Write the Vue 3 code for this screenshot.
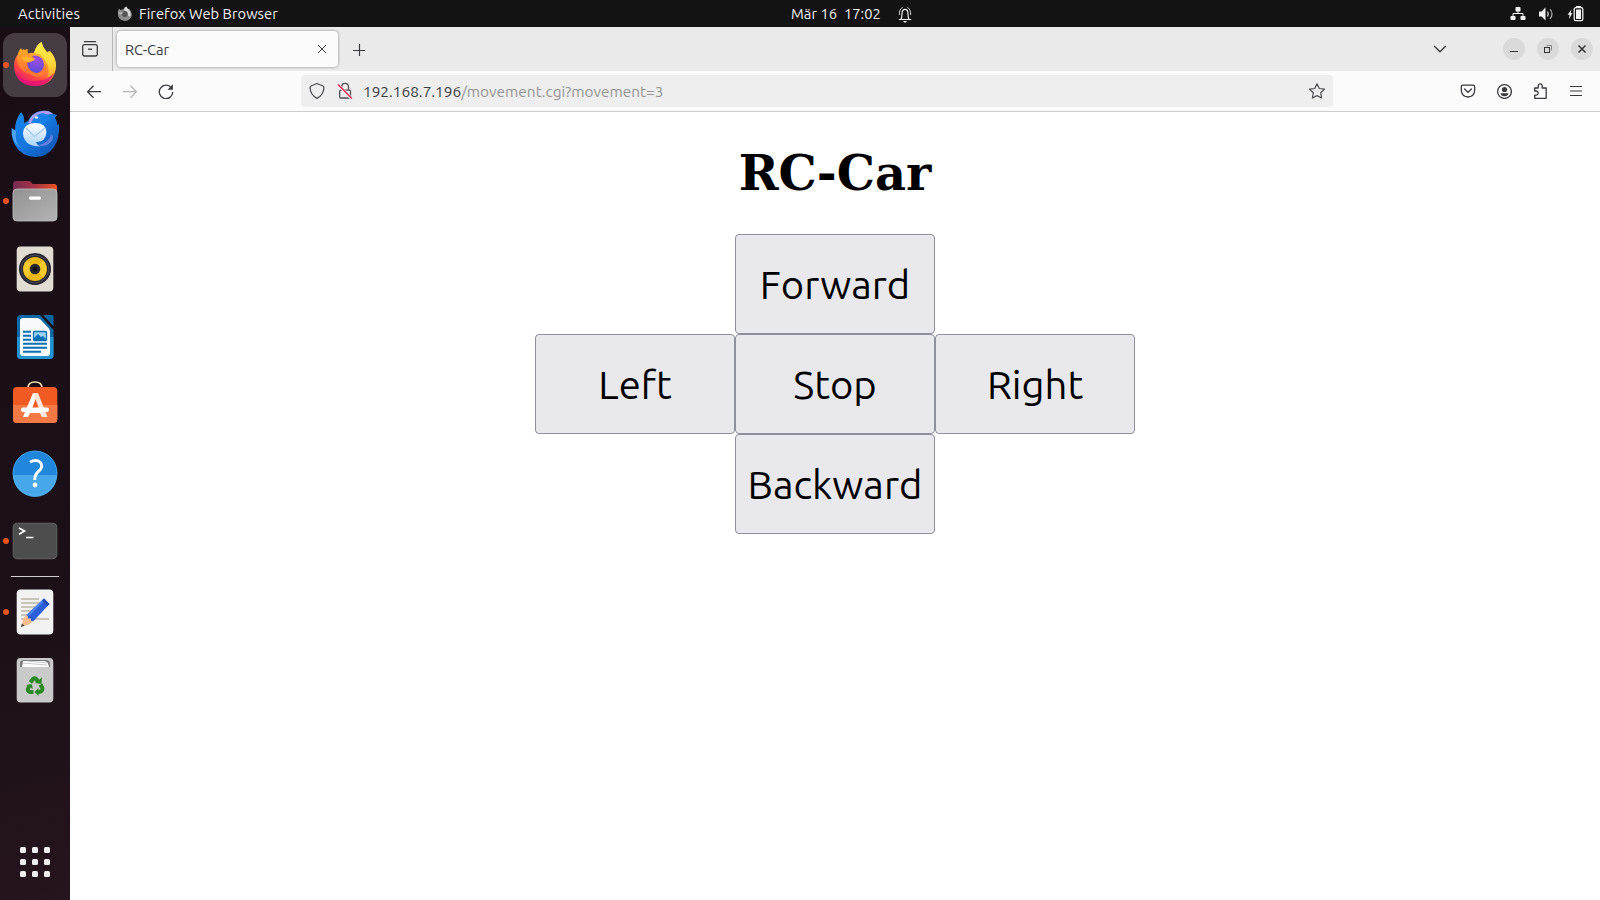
<script setup>
const pad = [
  { label: 'Forward', cls: 'forward' },
  { label: 'Left', cls: 'left' },
  { label: 'Stop', cls: 'stop' },
  { label: 'Right', cls: 'right' },
  { label: 'Backward', cls: 'backward' },
]
</script>

<template>
  <div class="desktop">
    <header class="topbar">
      <span class="activities">Activities</span>
      <span class="app-menu">
        <svg width="16" height="16" viewBox="0 0 16 16">
          <path d="M1 5 L2 2.6 L3.4 4 Q5 3.4 6 3.6 Q7.5 1 9.4 0.6 Q9.8 2 11 3 Q11.5 2.4 12.6 3.2 Q15 6 14.8 9 Q14 14.6 8 15 Q1.4 14.6 0.9 8.6 Z" fill="#8c8c8c" />
          <path d="M7 4 Q7.6 1.6 9.4 0.6 Q10 2.6 12.4 4.4 Q14.4 7 13 11 Q10 9 9.5 6 Z" fill="#d9d9d9" />
          <circle cx="7.8" cy="8" r="3" fill="#555" />
          <path d="M1.2 6.4 L6.6 6.6 Q5 8.8 2.4 8.2 Z" fill="#b9b9b9" />
        </svg>
        <span>Firefox Web Browser</span>
      </span>
      <span class="clock">Mär 16&nbsp; 17:02</span>
      <svg class="bell" width="14" height="18" viewBox="0 0 14 18" fill="none" stroke="#eee">
        <path d="M.8 14.500H13.200M3 14.500Q4 12 4 9Q4 4.400 7 4.400Q10 4.400 10 9Q10 12 11 14.500" stroke-width="1.200" />
        <path d="M1.300 10Q1.200 4 4.600 2.500M12.700 10Q12.800 4 9.400 2.500" stroke-width=".9" />
        <path d="M5 16H9L7.800 17.500H6.200Z" fill="#eee" stroke="none" />
      </svg>
      <div class="status">
        <svg width="16" height="16" viewBox="0 0 16 16" fill="#f2f2f2">
          <rect x="5.500" y="1" width="5" height="4.500" rx=".8" /><rect x=".5" y="10" width="5" height="4" rx=".8" /><rect x="10.500" y="10" width="5" height="4" rx=".8" />
          <path d="M8 5V8M3 10.500V7.500H13V10.500" fill="none" stroke="#f2f2f2" />
        </svg>
        <svg width="16" height="16" viewBox="0 0 16 16">
          <path d="M1 5.500H3.500L7.500 1.500V14.500L3.500 10.500H1Z" fill="#f2f2f2" />
          <path d="M9.500 5.500Q11 8 9.500 10.500" fill="none" stroke="#ddd" stroke-width="1.300" />
          <path d="M12 3.200Q16 8 12 12.800" fill="none" stroke="#aaa" stroke-width="1.200" />
        </svg>
        <svg width="17" height="16" viewBox="0 0 17 16">
          <path d="M4.400 3.500L.6 8.800H2.600L1.900 13L5.500 7.300H3.700Z" fill="#f2f2f2" />
          <rect x="7.200" y="1.700" width="8.600" height="13" rx="1.600" fill="none" stroke="#f2f2f2" stroke-width="1.300" />
          <rect x="9" y="3.500" width="5" height="9.500" fill="#f2f2f2" /><rect x="9" y="0" width="5" height="2" fill="#f2f2f2" />
        </svg>
      </div>
    </header>

    <div class="workspace">
      <nav class="dock">
        <div class="item active running">
          <svg width="64" height="64" viewBox="0 0 64 64">
            <defs>
              <linearGradient id="ffBody" x1=".8" y1=".1" x2=".25" y2="1"><stop offset="0" stop-color="#ffe03a" /><stop offset=".35" stop-color="#ffa02c" /><stop offset=".7" stop-color="#ff4a3e" /><stop offset="1" stop-color="#e3107c" /></linearGradient>
              <linearGradient id="ffTail" x1="0" y1="0" x2="0" y2="1"><stop offset="0" stop-color="#fff04e" /><stop offset=".6" stop-color="#ffd437" /><stop offset="1" stop-color="#ff9328" /></linearGradient>
              <linearGradient id="ffEar" x1="0" y1="0" x2="0" y2="1"><stop offset="0" stop-color="#ffaf25" /><stop offset="1" stop-color="#ff6a36" /></linearGradient>
              <radialGradient id="ffGlobe" cx=".6" cy=".2" r=".8"><stop offset="0" stop-color="#a04be5" /><stop offset="1" stop-color="#5b4ed8" /></radialGradient>
            </defs>
            <path d="M16 20 Q18 17 21 16 L24 21 Q28 19 31 20 Q33 12 38.500 9 Q39.500 14 44 19 L47 18 Q53 24 53 33 Q52 52 32 53 Q12 52 11 33 Q11 25 16 20Z" fill="url(#ffBody)" />
            <path d="M31 20 Q33 12 38.500 9 Q39.500 14 44 20 Q46 22 46 18 Q53 25 53 33 Q52 44 43 48 Q49 36 42 27 Q38 20 31 20Z" fill="url(#ffTail)" />
            <path d="M12 39 Q18 49 32 48 Q45 47 51 40 Q46 53 32 53 Q18 53 12 39Z" fill="#e50f78" opacity=".75" />
            <circle cx="32" cy="31.500" r="9" fill="url(#ffGlobe)" />
            <path d="M15 21 Q16 17 18 15 Q19 18 21 19 Q22 16 24.500 16 L25 22 Q29 22 32 26 Q28 29 24 30 Q25 38 33 40 Q23 43 17 35 Q13 29 15 21Z" fill="url(#ffEar)" />
            <path d="M18 24 Q27 23 32 27 Q27 30 21 28Z" fill="#ffb52b" />
            <path d="M24 34 Q27 41 35 40 Q42 38 42 31 Q45 42 35 44 Q25 43 24 34Z" fill="#ff7a35" />
          </svg>
        </div>
        <div class="item">
          <svg width="64" height="64" viewBox="0 0 64 64">
            <defs>
              <linearGradient id="tbBody" x1="0" y1="0" x2="1" y2="1"><stop offset="0" stop-color="#1487ec" /><stop offset=".5" stop-color="#1676df" /><stop offset="1" stop-color="#0d4fae" /></linearGradient>
              <linearGradient id="tbMail" x1="0" y1="0" x2="0" y2="1"><stop offset="0" stop-color="#fff" /><stop offset="1" stop-color="#a8d4fa" /></linearGradient>
            </defs>
            <path d="M18 11 Q22 15 21 22 L25 20 Q29 11 38 10 Q45 9 50 13 L54 14 L52 17 Q54 19 54 24 L56 23 Q57 37 51 46 Q44 56 32 56 Q18 55 12 44 Q8 37 8.500 27 L12 29 Q12 19 18 11Z" fill="url(#tbBody)" />
            <path d="M9 34 Q9 30 9 28 L13 30 Q11 41 18 47 Q11 43 9 34Z" fill="#4fa5f2" />
            <path d="M25 22 Q29 11 39 10 Q46 9 50 13 Q35 12 31 23Z" fill="#a99bed" />
            <path d="M28 22 Q32 13 40 12 Q47 14 48 18 Q40 20 42 24Z" fill="#1681e6" />
            <path d="M48 33 Q47 42 34 44 Q42 47 48 41 Q52 36 48 33Z" fill="#7b87e3" opacity=".75" />
            <path d="M20 32 Q21 22 32 22 Q43 22 43.500 31 Q43 41 33 41 Q34 44 37 45.500 Q25 45 22 39 Q20 36 20 32Z" fill="url(#tbMail)" />
            <path d="M23 27 L31.500 35.500 L42 27" fill="none" stroke="#a5c7e8" stroke-width="1.300" />
            <ellipse cx="33.500" cy="16.500" rx="1.700" ry="1.200" fill="#dff0ff" />
          </svg>
        </div>
        <div class="item running">
          <svg width="64" height="64" viewBox="0 0 64 64">
            <defs>
              <linearGradient id="fold"><stop offset="0" stop-color="#782b52" /><stop offset=".5" stop-color="#a63346" /><stop offset="1" stop-color="#e95420" /></linearGradient>
              <linearGradient id="grey" x1="0" y1="0" x2="1" y2="1"><stop offset="0" stop-color="#929292" /><stop offset="1" stop-color="#b3b3b3" /></linearGradient>
            </defs>
            <path d="M10 24V15Q10 12 13 12H26Q28 12 29.500 15H51Q54 15 54 18V24Z" fill="url(#fold)" />
            <rect x="10" y="20" width="44" height="32" rx="4" fill="url(#grey)" stroke="#c2c2c2" stroke-width=".8" />
            <rect x="26" y="27.500" width="12" height="3.200" rx="1.300" fill="#fff" />
          </svg>
        </div>
        <div class="item">
          <svg width="64" height="64" viewBox="0 0 64 64">
            <rect x="13.700" y="9.500" width="36.600" height="45" rx="4" fill="#e2ddd2" />
            <circle cx="32" cy="32" r="16" fill="#242530" /><circle cx="32" cy="32" r="13.800" fill="none" stroke="#4b4c59" stroke-width="1" />
            <circle cx="32" cy="32" r="12" fill="#e9b814" /><path d="M24 40.500A12 12 0 0 1 24 23.500L32 32L40 23.500A12 12 0 0 1 40 40.500L32 32Z" fill="#f5ca2a" />
            <circle cx="32" cy="32" r="5.300" fill="#292a2d" /><circle cx="32" cy="32" r="2.500" fill="#111" />
          </svg>
        </div>
        <div class="item">
          <svg width="64" height="64" viewBox="0 0 64 64">
            <path d="M18 10H37L50.500 25V50Q50.500 54 46.500 54H18Q14 54 14 50V14Q14 10 18 10Z" fill="#0d69a5" />
            <path d="M14 32H50.500V50Q50.500 54 46.500 54H18Q14 54 14 50Z" fill="#2493d1" />
            <path d="M20 13H34Q36 13 37.500 14.500L46 23.500Q47 25 47 27V48Q47 51 44 51H20Q17 51 17 48V16Q17 13 20 13Z" fill="#f8f9fa" />
            <path d="M40 10H49Q50.500 10 50.500 12V21Z" fill="#0b67a4" />
            <path d="M20 26.800H28M20 30.800H28M20 34.800H28M20 38.800H44M20 42.800H44M20 46.800H38" stroke="#0870b5" stroke-width="2" />
            <rect x="30.500" y="26.500" width="13" height="9" rx="1" fill="#9bd4f4" stroke="#0870b5" stroke-width="1.300" />
            <path d="M31 35V33L35 29L38 32L40 31L43 34V35Z" fill="#0870b5" />
          </svg>
        </div>
        <div class="item">
          <svg width="64" height="64" viewBox="0 0 64 64">
            <path d="M25 17V15Q25 9 32 9Q39 9 39 15V17" fill="none" stroke="#f5ddb5" stroke-width="1.700" />
            <rect x="10" y="14" width="44.300" height="36" rx="4" fill="#f15b23" />
            <path d="M10 32H54.300V46Q54.300 50 50.500 50H14Q10 50 10 46Z" fill="#f47a45" />
            <path d="M30 20H35L29 36H40L42 41L44 44H39L37 40H27L25 44H20L22 39Z" fill="#fff" />
            <path d="M30 20H35L44.500 44H39.500L32 25Z" fill="#ffe6dc" />
            <path d="M32 28L35 36H29Z" fill="#f15b23" /><rect x="18" y="34.500" width="28" height="4.500" rx="2.200" fill="#fff" />
          </svg>
        </div>
        <div class="item">
          <svg width="64" height="64" viewBox="0 0 64 64">
            <circle cx="32" cy="32" r="22.200" fill="#2087dc" /><path d="M10 34H54A22 22 0 0 1 10 34Z" fill="#47a7e8" />
            <circle cx="32" cy="32" r="22" fill="none" stroke="#55b2ef" stroke-width=".7" />
            <path d="M27 21Q33 18 37 21Q40.500 25 37 29Q31.500 33 31.800 39" fill="none" stroke="#fff" stroke-width="2.800" /><circle cx="32" cy="44" r="2.400" fill="#fff" />
          </svg>
        </div>
        <div class="item running">
          <svg width="64" height="64" viewBox="0 0 64 64">
            <rect x="10.200" y="14.200" width="43.600" height="35.600" rx="4" fill="#4d4d4d" stroke="#6d6d6d" stroke-width=".8" />
            <path d="M16 19L21.500 22L16 25.300" fill="none" stroke="#fff" stroke-width="1.700" /><path d="M23 28.500H30.500" stroke="#fff" stroke-width="1.500" />
          </svg>
        </div>
        <div class="separator"></div>
        <div class="item running">
          <svg width="64" height="64" viewBox="0 0 64 64">
            <rect x="13.700" y="9.500" width="36.600" height="45" rx="4" fill="#f2f2f2" />
            <path d="M18 19H36M18 23H38M18 27H32M18 31H34M18 35H30M18 39H46" stroke="#c9c5b8" stroke-width="1.800" />
            <path d="M18 47L20.500 38L24 34.500L30.500 41L26 44.500Z" fill="#f6be8e" /><path d="M18 47L19 43.500L21.500 45.800Z" fill="#444" />
            <path d="M23.500 35L41 18.500L46.500 24L30.500 41H28V38.500H25V36.500Z" fill="#2c5edb" /><path d="M23.500 35L41 18.500L42.600 20.100L26 36Z" fill="#4b80f0" /><path d="M41 18.500L46.500 24L44.500 26L39 20.500Z" fill="#2449b3" />
          </svg>
        </div>
        <div class="item">
          <svg width="64" height="64" viewBox="0 0 64 64">
            <rect x="13.700" y="10" width="36.600" height="44.500" rx="4" fill="#cacaca" />
            <path d="M17 19V16Q17 12 21 12H43Q47 12 47 16V19Z" fill="#777" />
            <path d="M19 19L20 13H42L45 15L46 19Z" fill="#fff" /><path d="M20 15L44 17M24 13L45 15" stroke="#bbb" stroke-width=".8" />
            <g fill="none" stroke="#298a24" stroke-width="4">
              <path d="M27.500 34.500L30 31Q32 29.500 34 32L35 34" /><path d="M37.500 36.500L39.300 40Q40 43.500 36 44H34" /><path d="M30.500 44H27Q23.500 43 25.500 39.500L26 38.500" />
            </g>
            <path d="M32 35L38.500 36L39 29.500ZM35.500 40V48L31.500 44ZM23 37L28.500 36L30 41Z" fill="#298a24" />
          </svg>
        </div>
        <div class="apps"><i v-for="n in 9" :key="n"></i></div>
      </nav>

      <section class="browser">
        <div class="tabstrip">
          <div class="view-btn">
            <svg width="18" height="18" viewBox="0 0 18 18" fill="none" stroke="#3a3a3e" stroke-width="1.300">
              <path d="M3.500 1.700H14.500" stroke-linecap="round" /><rect x="1.700" y="4.700" width="14.600" height="11.300" rx="1.800" /><path d="M7 9.200H11" />
            </svg>
          </div>
          <div class="tab">
            <span class="tab-title">RC-Car</span>
            <svg width="10" height="10" viewBox="0 0 10 10" stroke="#3a3a3e" stroke-width="1"><path d="M1 1L9 9M9 1L1 9" /></svg>
          </div>
          <svg class="plus" width="14" height="14" viewBox="0 0 14 14" stroke="#3a3a3e" stroke-width="1.200"><path d="M1 7.500H13M7.500 1V13" /></svg>
          <svg class="chevron" width="14" height="10" viewBox="0 0 14 10" fill="none" stroke="#3a3a3e" stroke-width="1.300"><path d="M1.200 2L7 7.800L12.800 2" /></svg>
          <div class="win-btns">
            <span><svg width="10" height="10" viewBox="0 0 10 10" stroke="#333"><path d="M1 7.500H9" /></svg></span>
            <span><svg width="10" height="10" viewBox="0 0 10 10" fill="none" stroke="#333"><rect x="1.500" y="3.500" width="5" height="5" /><path d="M3.500 1.500H8.500V6.500" stroke="#888" /></svg></span>
            <span><svg width="10" height="10" viewBox="0 0 10 10" stroke="#333" stroke-width="1.500"><path d="M1.500 1.500L8.500 8.500M8.500 1.500L1.500 8.500" /></svg></span>
          </div>
        </div>

        <div class="toolbar">
          <div class="nav-btns">
            <svg width="16" height="16" viewBox="0 0 16 16" fill="none" stroke="#3a3a3e" stroke-width="1.300"><path d="M15 8.700H1.800M7.500 2.700L1.600 8.700L7.500 14.700" /></svg>
            <svg width="16" height="16" viewBox="0 0 16 16" fill="none" stroke="#b4b4b6" stroke-width="1.300"><path d="M1 8.700H14.200M8.500 2.700L14.400 8.700L8.500 14.700" /></svg>
            <svg width="16" height="16" viewBox="0 0 16 16" fill="none" stroke="#3a3a3e" stroke-width="1.300"><path d="M13.300 4.800A6.700 6.700 0 1 0 14.700 9" /><path d="M14.900 1.300V6.800H9.500Z" fill="#3a3a3e" stroke="none" /></svg>
          </div>
          <div class="urlbar">
            <svg width="16" height="18" viewBox="0 0 16 18" fill="none" stroke="#505054" stroke-width="1.300"><path d="M8 1.500L14 4Q15 4.500 14.900 6Q14.500 13 8 16.300Q1.500 13 1.100 6Q1 4.500 2 4Z" stroke-linejoin="round" /></svg>
            <svg class="lock" width="16" height="18" viewBox="0 0 16 18" fill="none" stroke="#505054" stroke-width="1.300"><rect x="2.700" y="8.200" width="10.800" height="7.800" rx="1" /><path d="M4.700 8V5Q4.700 1.300 8.100 1.300Q11.500 1.300 11.500 5V8" /><path d="M1 3L14.500 16.500" stroke="#f0f0f0" stroke-width="3" /><path d="M1 2.500L14.800 16.500" stroke="#e22850" stroke-width="1.400" /></svg>
            <span class="url"><b>192.168.7.196</b>/movement.cgi?movement=3</span>
            <svg class="star" width="18" height="18" viewBox="0 0 18 18" fill="none" stroke="#505054" stroke-width="1.200" stroke-linejoin="round"><path d="M9 1.700L11.300 6.500L16.500 7.200L12.700 10.800L13.600 16L9 13.600L4.400 16L5.300 10.800L1.500 7.200L6.700 6.500Z" /></svg>
          </div>
          <div class="tools">
            <svg width="16" height="16" viewBox="0 0 16 16" fill="none" stroke="#3a3a3e" stroke-width="1.300"><path d="M2.800 2.200H13.200Q14.700 2.200 14.700 3.700V7.500Q14 13.800 8 14Q2 13.800 1.300 7.500V3.700Q1.300 2.200 2.800 2.200Z" /><path d="M4.600 6L8 9.400L11.400 6" stroke-linecap="round" /></svg>
            <svg width="16" height="16" viewBox="0 0 16 16"><circle cx="8.500" cy="8.500" r="6.900" fill="none" stroke="#3a3a3e" stroke-width="1.300" /><circle cx="8.500" cy="6.500" r="2.600" fill="#3a3a3e" /><path d="M4.500 10.200H12.500Q12 13 8.500 13.200Q5 13 4.500 10.200Z" fill="#3a3a3e" /></svg>
            <svg width="16" height="18" viewBox="0 0 16 18" fill="none" stroke="#3a3a3e" stroke-width="1.300" stroke-linejoin="round"><path d="M1.700 9V6H5.200V3.800Q5.400 1.900 7.200 1.900Q9 1.900 9.200 3.800V6H13.200V16.300H1.700V13.100H3.400Q5.200 12.800 5.200 11.100Q5.200 9.400 3.400 9H1.700Z" /></svg>
            <svg width="14" height="14" viewBox="0 0 14 14" stroke="#3a3a3e" stroke-width="1.200"><path d="M1 2.500H13M1 7H13M1 11.500H13" /></svg>
          </div>
        </div>

        <main class="page">
          <h1>RC-Car</h1>
          <div class="pad">
            <button v-for="b in pad" :key="b.cls" :class="b.cls">{{ b.label }}</button>
          </div>
        </main>
      </section>
    </div>
  </div>
</template>

<style>
body { margin: 0; overflow: hidden; }
</style>

<style scoped>
.desktop { width: 1600px; height: 900px; display: flex; flex-direction: column; font-family: Ubuntu, "Noto Sans", sans-serif; background: #fff; }
.desktop * { box-sizing: border-box; }
svg { display: block; flex: none; }
.topbar { height: 27px; flex: none; background: #131313; color: #f2f2f2; display: flex; align-items: center; font-size: 14.667px; line-height: 27px; white-space: nowrap; }
.activities { width: 117px; padding-left: 18px; letter-spacing: .2px; }
.app-menu { width: 674px; display: flex; align-items: center; gap: 6px; letter-spacing: .05px; }
.clock { width: 107px; letter-spacing: .06px; }
.status { margin-left: auto; display: flex; align-items: center; gap: 12px; padding-right: 16px; }
.status svg:nth-child(-n + 2) { position: relative; left: -1px; }
.workspace { flex: 1; display: flex; min-height: 0; }
.dock { width: 70px; flex: none; padding-top: 4px; display: flex; flex-direction: column; background: linear-gradient(165deg, #190e15 0%, #1b1017 60%, #1f1219 80%, #26141e 100%); }
.item { position: relative; height: 68px; flex: none; padding: 2px 3px; }
.active svg { background: #463c43; border-radius: 12px; }
.running::before { content: ""; position: absolute; left: 3px; top: 31px; width: 6px; height: 6px; border-radius: 50%; background: #e95420; }
.separator { flex: none; width: 48px; height: 1px; margin: 1px 11px; background: #d2cdd0; }
.apps { margin: auto auto 23px 20px; display: grid; grid-template-columns: repeat(3, 6px); grid-auto-rows: 6px; gap: 6px; }
.apps i { background: #eee; border-radius: 1.5px; }
.browser { flex: 1; min-width: 0; display: flex; flex-direction: column; }
.tabstrip { height: 44px; flex: none; background: #eaeaea; display: flex; align-items: center; color: #3a3a3e; }
.view-btn { width: 43px; height: 44px; border-right: 1px solid #b8b8b8; padding: 13px 0 0 11px; }
.tab { width: 221px; height: 36px; margin-left: 4px; border-radius: 4px; background: #fbfbfb; box-shadow: 0 0 3px rgba(0, 0, 0, .45); display: flex; align-items: center; justify-content: space-between; padding: 0 11px 0 8px; }
.tab-title { font-size: 14.667px; padding-top: 1px; }
.plus { margin: 1px 0 0 14px; }
.chevron { margin-left: auto; }
.win-btns { display: flex; gap: 12px; margin: 0 7px 0 56px; }
.win-btns span { width: 22px; height: 22px; border-radius: 50%; background: #dadada; display: grid; place-items: center; }
.toolbar { height: 41px; flex: none; background: #fbfbfb; border-bottom: 1px solid #ccc; display: flex; align-items: center; }
.nav-btns { width: 231px; padding-left: 16px; display: flex; gap: 20px; }
.urlbar { width: 1032px; height: 32px; border-radius: 4px; background: #eee; display: flex; align-items: center; padding-left: 8px; }
.lock { margin-left: 12px; }
.url { margin-left: 10px; font-size: 15.400px; white-space: nowrap; color: #949494; }
.url b { font-weight: 400; color: #3a3a3e; }
.star { margin: 0 7px 0 auto; }
.tools { margin-left: auto; padding-right: 17px; display: flex; align-items: center; gap: 20.5px; }
.page { flex: 1; display: flex; flex-direction: column; align-items: center; background: #fff; color: #000; }
h1 { margin: 33px 0 0; font: bold 48px/56px "DejaVu Serif", serif; height: 89px; }
.pad { display: grid; grid-template: repeat(3, 100px) / repeat(3, 200px); grid-template-areas: ". forward ." "left stop right" ". backward ."; }
.pad button { margin: 0; padding: 1px 0 0; border: 1px solid #8f8f9d; border-radius: 4px; background: #e9e9ed; color: #000; font-family: inherit; font-size: 40px; line-height: 1; }
.forward { grid-area: forward; }
.left { grid-area: left; }
.stop { grid-area: stop; }
.right { grid-area: right; }
.backward { grid-area: backward; }
</style>
